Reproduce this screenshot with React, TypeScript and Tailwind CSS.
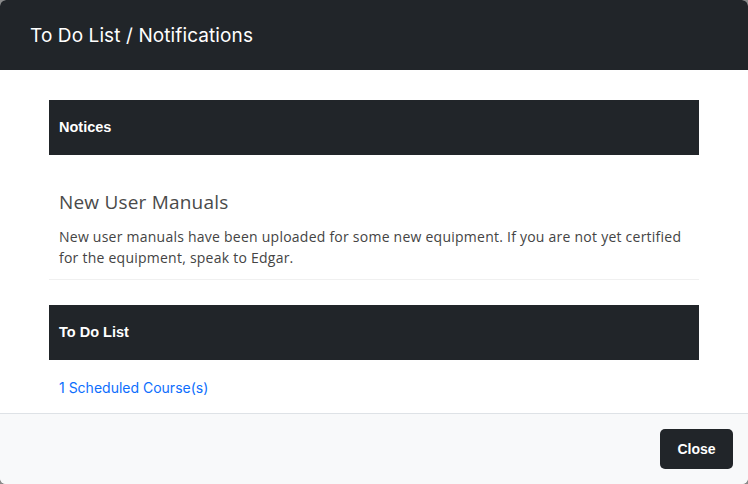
import React from "react";

export default function App() {
  return (
    <div className="w-[748px] h-[484px] bg-[#8a8a8a]">
      <div className="w-full h-full rounded-[6px] overflow-hidden flex flex-col bg-white" style={{ fontFamily: "Inter, 'Noto Sans', sans-serif" }}>
        <div className="h-[70px] shrink-0 bg-[#212529] flex items-center px-[30px] pt-[3px]">
          <h1 className="text-[19px] text-white tracking-[0.1px]">To Do List / Notifications</h1>
        </div>
        <div className="flex-1 px-[49px] pt-[30px]">
          <div className="h-[55px] bg-[#212529] flex items-center px-[10px] pt-[1px]">
            <span className="text-[14.5px] font-bold text-white" style={{ fontFamily: "'Liberation Sans', Arial, sans-serif" }}>Notices</span>
          </div>
          <div className="px-[10px] pt-[35px] pb-[11px] border-b border-[#f0f0f0]" style={{ fontFamily: "'Open Sans', sans-serif" }}>
            <h2 className="text-[19px] leading-[24px] text-[#4a4a4a] tracking-[0.2px]">New User Manuals</h2>
            <p className="mt-[12px] text-[14px] leading-[21px] text-[#444] tracking-[0.24px]">
              New user manuals have been uploaded for some new equipment. If you are not yet certified for the equipment, speak to Edgar.
            </p>
          </div>
          <div className="mt-[25px] h-[55px] bg-[#212529] flex items-center px-[10px] pt-[1px]">
            <span className="text-[14.5px] font-bold text-white" style={{ fontFamily: "'Liberation Sans', Arial, sans-serif" }}>To Do List</span>
          </div>
          <div className="px-[10px] pt-[15px]">
            <a className="text-[14px] text-[#0d6efd]" href="#">1 Scheduled Course(s)</a>
          </div>
        </div>
        <div className="h-[71px] shrink-0 border-t border-[#dee2e6] bg-[#f8f9fa] flex items-center justify-end px-[15px]">
          <button className="w-[73px] h-[40px] rounded-[5px] bg-[#212529] text-white text-[14px] font-bold" style={{ fontFamily: "'Liberation Sans', Arial, sans-serif" }}>Close</button>
        </div>
      </div>
    </div>
  );
}
